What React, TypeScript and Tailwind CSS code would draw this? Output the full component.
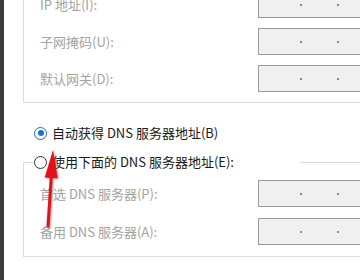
import React from 'react';

const font = { fontFamily: '"Noto Sans CJK SC", "Noto Sans", sans-serif' };

const IpBox = () => (
    <div className="h-[27px] w-[120px] shrink-0 border border-[#9a9a9a] bg-[#f0f0f0] flex items-center">
        <span className="ml-[41px] w-[2px] h-[2px] bg-[#8a8a8a]" />
        <span className="ml-[35px] w-[2px] h-[2px] bg-[#8a8a8a]" />
    </div>
);

const Row = ({ label }: { label: string }) => (
    <div className="flex items-center">
        <div className="w-[218px] shrink-0 text-[13px] leading-4 text-[#a3a3a3]">{label}</div>
        <IpBox />
    </div>
);

const Radio = ({ checked }: { checked?: boolean }) =>
    checked ? (
        <span className="w-[13px] h-[13px] shrink-0 rounded-full border-[1.5px] border-[#1a6fd0] bg-white flex items-center justify-center">
            <span className="w-[6px] h-[6px] rounded-full bg-[#1a6fd0]" />
        </span>
    ) : (
        <span className="w-[13px] h-[13px] shrink-0 rounded-full border border-[#333333] bg-white" />
    );

const App: React.FC = () => {
    return (
        <div className="relative w-[360px] h-[280px] overflow-hidden bg-white flex" style={font}>
            <div className="w-[4px] shrink-0 bg-[#3c3c3c]" />
            <div className="flex flex-col pl-[19px]">
                {/* IP group, top cut off */}
                <div className="mt-[-9px] w-[400px] border-l border-b border-[#dcdcdc] pl-4 pb-[10px] flex flex-col gap-[10px]">
                    <Row label="IP 地址(I):" />
                    <Row label="子网掩码(U):" />
                    <Row label="默认网关(D):" />
                </div>

                <div className="mt-[22px] h-4 flex items-center pl-[11px]">
                    <Radio checked />
                    <span className="ml-[5px] text-[13px] leading-4 text-[#1a1a1a]">自动获得 DNS 服务器地址(B)</span>
                </div>

                {/* DNS group with radio caption */}
                <div className="mt-[13px] w-[400px]">
                    <div className="h-4 flex items-center">
                        <div className="self-end h-2 w-[11px] border-l border-t border-[#dcdcdc]" />
                        <Radio />
                        <span className="ml-[5px] text-[13px] leading-4 text-[#1a1a1a]">使用下面的 DNS 服务器地址(E):</span>
                        <div className="self-end h-2 ml-auto w-[123px] border-t border-[#dcdcdc]" />
                    </div>
                    <div className="border-l border-b border-[#dcdcdc] pl-4 pt-[10px] pb-[11px] flex flex-col gap-[11px]">
                        <Row label="首选 DNS 服务器(P):" />
                        <Row label="备用 DNS 服务器(A):" />
                    </div>
                </div>
            </div>

            {/* red annotation arrow */}
            <svg className="absolute left-0 top-0 pointer-events-none" width="360" height="280" viewBox="0 0 360 280">
                <g style={{ filter: 'drop-shadow(1px 1px 1px rgba(80,0,0,0.45))' }}>
                    <line x1="48" y1="226" x2="51.3" y2="176" stroke="#e2121c" strokeWidth="3" strokeLinecap="round" />
                    <polygon points="53,150 57.7,178.3 44.7,177.5" fill="#e2121c" />
                </g>
            </svg>
        </div>
    );
};

export default App;
